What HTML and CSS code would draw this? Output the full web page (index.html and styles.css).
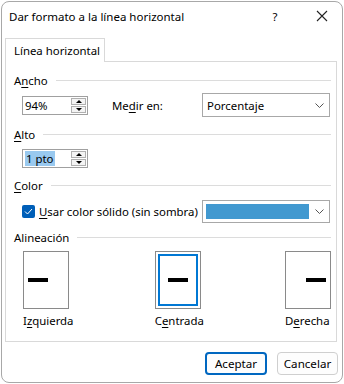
FILE: index.html
```html
<!DOCTYPE html>
<html lang="es">
<head>
    <meta charset="UTF-8">
    <title>Dar formato a la línea horizontal</title>
    <link rel="stylesheet" href="styles.css">
</head>
<body>
    <div class="window">
        <div class="titlebar">
            <span class="title">Dar formato a la línea horizontal</span>
            <span class="help">?</span>
            <span class="close">
                <svg width="12" height="12" viewBox="0 0 12 12"><path d="M1 1 L11 11 M11 1 L1 11" stroke="#222" stroke-width="1.1" fill="none"/></svg>
            </span>
        </div>

        <div class="tabs">
            <div class="tab">Línea horizontal</div>
        </div>
        <div class="panel">
            <!-- Ancho -->
            <div class="legend"><span>A<u>n</u>cho</span><i></i></div>
            <div class="row row-ancho">
                <div class="spin">
                    <span class="spin-value">94%</span>
                    <div class="spin-btns">
                        <b class="up"></b>
                        <b class="down"></b>
                    </div>
                </div>
                <span class="measure">Me<u>d</u>ir en:</span>
                <div class="select">
                    <span>Porcentaje</span>
                    <svg class="chev" width="9" height="5" viewBox="0 0 9 5"><path d="M0.5 0.5 L4.5 4.5 L8.5 0.5" stroke="#555" fill="none"/></svg>
                </div>
            </div>

            <!-- Alto -->
            <div class="legend"><span><u>A</u>lto</span><i></i></div>
            <div class="row row-alto">
                <div class="spin">
                    <span class="spin-value"><mark>1 pto</mark></span>
                    <div class="spin-btns">
                        <b class="up"></b>
                        <b class="down"></b>
                    </div>
                </div>
            </div>

            <!-- Color -->
            <div class="legend"><span><u>C</u>olor</span><i></i></div>
            <div class="row row-color">
                <span class="check">
                    <svg width="9" height="7" viewBox="0 0 9 7"><path d="M1 3.5 L3.5 6 L8 1" stroke="#fff" stroke-width="1" fill="none"/></svg>
                </span>
                <span class="check-label"><u>U</u>sar color sólido (sin sombra)</span>
                <div class="select select-color">
                    <span class="swatch"></span>
                    <svg class="chev" width="9" height="5" viewBox="0 0 9 5"><path d="M0.5 0.5 L4.5 4.5 L8.5 0.5" stroke="#555" fill="none"/></svg>
                </div>
            </div>

            <!-- Alineación -->
            <div class="legend"><span>Alineación</span><i></i></div>
            <div class="align">
                <div class="align-item">
                    <div class="page left"><span class="dash"></span></div>
                    <span class="align-label">I<u>z</u>quierda</span>
                </div>
                <div class="align-item">
                    <div class="page center selected"><span class="dash"></span></div>
                    <span class="align-label">C<u>e</u>ntrada</span>
                </div>
                <div class="align-item">
                    <div class="page right"><span class="dash"></span></div>
                    <span class="align-label">D<u>e</u>recha</span>
                </div>
            </div>
        </div>

        <div class="buttons">
            <button class="btn primary">Aceptar</button>
            <button class="btn">Cancelar</button>
        </div>
    </div>
</body>
</html>
```

FILE: styles.css
```css
body {
    margin: 0;
    background: #ffffff;
    font-family: "Noto Sans", "Open Sans", sans-serif;
    font-size: 11.4px;
    color: #000;
    white-space: nowrap;
}

u {
    text-decoration: underline;
    text-underline-offset: 2px;
}

.window {
    box-sizing: border-box;
    width: 342px;
    height: 382px;
    margin: 1px;
    border: 1px solid #a8a8a8;
    border-radius: 8px;
    background: #fff;
}

/* Barre de titre */
.titlebar {
    display: flex;
    align-items: center;
    height: 28px;
    padding-left: 7px;
}

.title {
    flex: 1;
    font-size: 11.5px;
}

.help {
    width: 20px;
    text-align: center;
    margin-right: 31px;
}

.close {
    display: flex;
    margin-right: 14px;
}

/* Onglets */
.tabs {
    display: flex;
    margin: 8px 0 0 3px;
}

.tab {
    box-sizing: border-box;
    width: 100px;
    height: 24px;
    padding: 4px 0 0 8px;
    border: 1px solid #d9d9d9;
    border-bottom: none;
    background: #fff;
    margin-bottom: -1px;
    position: relative;
}

.panel {
    box-sizing: border-box;
    height: 281px;
    margin: 0 5px 0 3px;
    padding: 10px 5px 0 8px;
    border: 1px solid #d9d9d9;
}

.legend {
    display: flex;
    align-items: center;
    height: 16px;
}

.legend i {
    flex: 1;
    height: 1px;
    margin-left: 8px;
    background: #dcdcdc;
}

.row {
    display: flex;
    align-items: center;
    padding-left: 8px;
}

.row-ancho {
    height: 24px;
    margin: 5px 0 9px;
}

.row-alto {
    height: 19px;
    margin: 7px 0 9px;
}

.row-color {
    height: 24px;
    margin: 6px 0 6px;
}

/* Champs numériques */
.spin {
    box-sizing: border-box;
    display: flex;
    align-items: center;
    width: 66px;
    height: 19px;
    border: 1px solid #a0a0a0;
    padding-left: 2px;
}

.spin-value {
    flex: 1;
}

.spin-value mark {
    background: #99c9ef;
    color: #000;
    padding: 0 1px;
}

.spin-btns {
    display: flex;
    flex-direction: column;
    gap: 1px;
    margin-right: 1px;
}

.spin-btns b {
    box-sizing: border-box;
    display: flex;
    align-items: center;
    justify-content: center;
    width: 15px;
    height: 7px;
    border: 1px solid #b0b0b0;
    background: #f4f4f4;
}

.spin-btns b::after {
    content: "";
    border-left: 3px solid transparent;
    border-right: 3px solid transparent;
}

.spin-btns .up::after {
    border-bottom: 3px solid #000;
}

.spin-btns .down::after {
    border-top: 3px solid #000;
}

.measure {
    width: 90px;
    margin-left: 24px;
}

/* Listes déroulantes */
.select {
    box-sizing: border-box;
    display: flex;
    align-items: center;
    justify-content: space-between;
    width: 128px;
    height: 24px;
    padding: 0 5px 0 4px;
    border: 1px solid #a8a8a8;
}

.select-color {
    height: 23px;
    padding-left: 3px;
}

.select .swatch {
    width: 103px;
    height: 15px;
    background: #4299d0;
}

/* Case à cocher */
.check {
    display: flex;
    align-items: center;
    justify-content: center;
    width: 13px;
    height: 13px;
    border-radius: 2px;
    background: #005fb8;
}

.check-label {
    width: 163px;
    margin-left: 4px;
}

/* Alignement */
.align {
    display: flex;
    justify-content: space-between;
    margin: 6px 0 0 9px;
}

.align-item {
    display: flex;
    flex-direction: column;
}

.page {
    box-sizing: border-box;
    display: flex;
    align-items: center;
    width: 46px;
    height: 58px;
    padding: 0 4px;
    border: 1px solid #8a8a8a;
}

.page.center {
    justify-content: center;
}

.page.right {
    justify-content: flex-end;
}

.page.selected {
    box-shadow: inset 0 0 0 2px #fff, inset 0 0 0 4px #0078d4;
}

.dash {
    width: 20px;
    height: 4px;
    background: #000;
}

.align-label {
    margin-top: 4px;
    line-height: 16px;
}

/* Boutons */
.buttons {
    display: flex;
    justify-content: flex-end;
    gap: 10px;
    margin-top: 10px;
    padding-right: 4px;
}

.btn {
    box-sizing: border-box;
    width: 61px;
    height: 23px;
    padding: 0;
    font-family: inherit;
    font-size: 11.6px;
    color: #000;
    background: #fdfdfd;
    border: 1px solid #cfcfcf;
    border-radius: 4px;
}

.btn.primary {
    width: 62px;
    border: 2px solid #0067c0;
}
```
